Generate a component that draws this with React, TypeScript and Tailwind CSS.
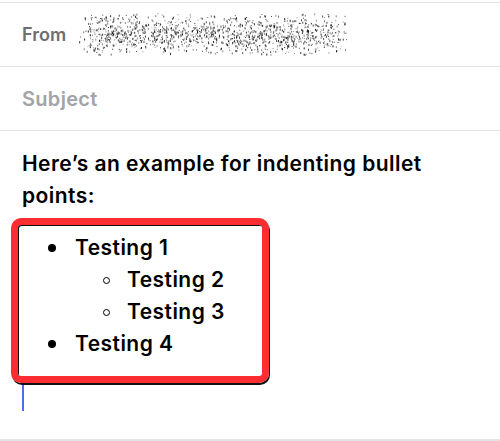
import { useMemo } from "react";

// pseudo-random noise standing in for the blurred sender address
function Scribble() {
  const dots = useMemo(() => {
    let seed = 7;
    const rand = () => {
      seed = (seed * 16807) % 2147483647;
      return seed / 2147483647;
    };
    const out: { x: number; y: number; o: number; w: number; h: number }[] = [];
    for (let i = 0; i < 2600; i++) {
      const x = rand() * 272;
      const yBase = rand() * 42;
      const edge = Math.min(x, 272 - x) / 20;
      const mid = 1 - Math.abs(yBase - 21) / 23;
      if (rand() > Math.min(1, edge) * mid) continue;
      out.push({
        x,
        y: yBase + 1,
        o: 0.35 + rand() * 0.65,
        w: 1,
        h: rand() > 0.5 ? 2 : 1,
      });
    }
    return out;
  }, []);

  return (
    <svg width="272" height="44" viewBox="0 0 272 44" className="block">
      {dots.map((d, i) => (
        <rect key={i} x={d.x} y={d.y} width={d.w} height={d.h} fill="#1a1a1a" opacity={d.o} />
      ))}
    </svg>
  );
}

const items = [
  { text: "Testing 1", level: 0 },
  { text: "Testing 2", level: 1 },
  { text: "Testing 3", level: 1 },
  { text: "Testing 4", level: 0 },
];

export default function App() {
  return (
    <div className="w-[500px] h-[441px] bg-white overflow-hidden font-['Inter',sans-serif]">
      <div className="mt-[2px] border-t border-[#e3e3e6]" />

      {/* From row */}
      <div className="h-[64px] flex items-center pl-[22px] border-b border-[#e3e3e6]">
        <span className="text-[18px] font-semibold text-[#6e6e73]">From</span>
        <div className="ml-[10px] -mt-[2px]">
          <Scribble />
        </div>
      </div>

      {/* Subject row */}
      <div className="h-[64px] flex items-center pl-[22px] border-b border-[#e3e3e6]">
        <span className="text-[20px] font-semibold text-[#a3a3a8] tracking-[0.3px]">Subject</span>
      </div>

      {/* Body */}
      <div className="h-[308px] pt-[17px] pl-[22px] text-black">
        <p className="text-[21px] leading-[32px] font-semibold tracking-[0.45px] w-[440px]">
          Here’s an example for indenting bullet points:
        </p>

        <div className="mt-[6px] -ml-[11px] w-[258px] h-[165px] rounded-[10px] border-[7px] border-[#fd2d32] shadow-[1px_2px_0_#111]">
          <div className="h-full rounded-[3px] shadow-[inset_1px_1px_0_#111] pt-[7px]">
            {items.map((it) => (
              <div key={it.text} className="h-[32px] flex items-center">
                {it.level === 0 ? (
                  <>
                    <span className="ml-[30px] w-[8px] h-[8px] rounded-full bg-black" />
                    <span className="ml-[19px] text-[21px] font-semibold tracking-[0.45px]">{it.text}</span>
                  </>
                ) : (
                  <>
                    <span className="ml-[85px] w-[7px] h-[7px] rounded-full border border-black" />
                    <span className="ml-[17px] text-[21px] font-semibold tracking-[0.45px]">{it.text}</span>
                  </>
                )}
              </div>
            ))}
          </div>
        </div>

        {/* caret */}
        <div className="mt-[2px] w-[2px] h-[26px] bg-[#4a6cf0]" />
      </div>

      <div className="border-t-[2px] border-[#e3e3e6]" />
    </div>
  );
}
